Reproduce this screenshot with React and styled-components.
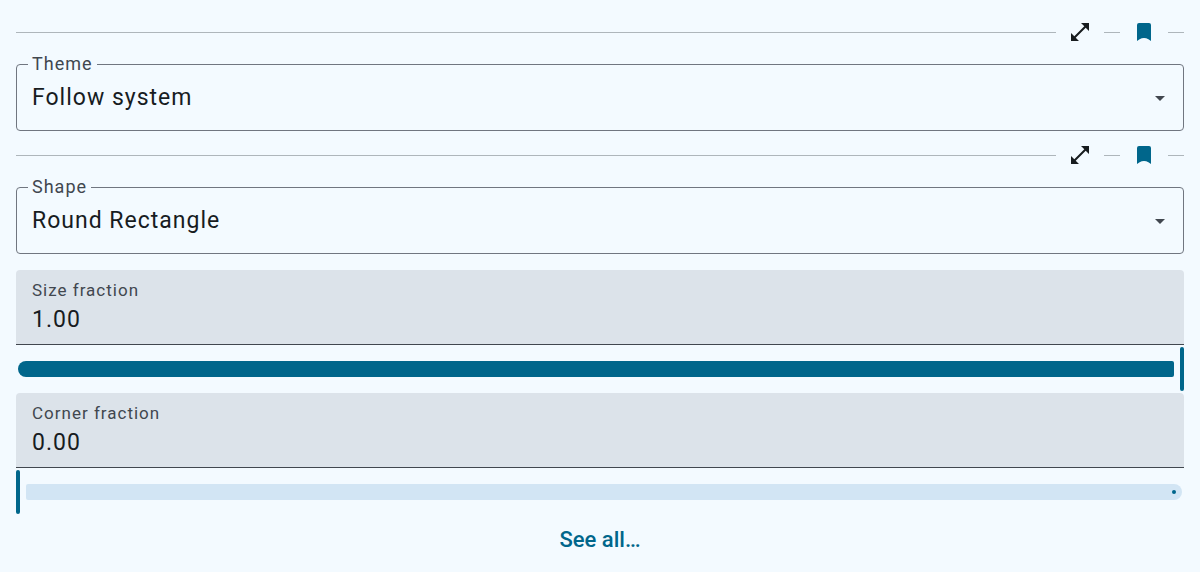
import React, { useId, useState } from "react";
import styled, { createGlobalStyle, ThemeProvider } from "styled-components";

const theme = {
  surface: "#f3faff",
  field: "#dce3ea",
  text: "#171c1f",
  label: "#41474f",
  outline: "#707680",
  divider: "#aeb6bb",
  primary: "#00668b",
  track: "#d2e5f4",
};

const GlobalStyle = createGlobalStyle`
  *, *::before, *::after { box-sizing: border-box; }
  body {
    margin: 0;
    background: ${theme.surface};
    color: ${theme.text};
    font-family: Roboto, "Liberation Sans", sans-serif;
  }
`;

const Page = styled.main`
  display: flex;
  flex-direction: column;
  padding: 8px 16px;
`;

const Settings = styled.div`
  display: flex;
  flex-direction: column;
  margin-bottom: 16px;
`;

const Toolbar = styled.div`
  display: flex;
  align-items: center;
  height: 48px;
`;

const Rule = styled.hr`
  flex: ${(p) => (p.$short ? "0 0 16px" : "1")};
  height: 1px;
  margin: 0;
  border: 0;
  background: ${(p) => p.theme.divider};
`;

const IconButton = styled.button`
  display: grid;
  place-items: center;
  width: 48px;
  height: 48px;
  padding: 0;
  border: 0;
  border-radius: 50%;
  background: none;
  color: ${(p) => (p.$active ? p.theme.primary : p.theme.text)};
  cursor: pointer;
`;

const Icon = styled.svg`
  display: block;
  width: 24px;
  height: 24px;
  fill: currentColor;
`;

const Outlined = styled.fieldset`
  min-width: 0;
  margin: 0;
  padding: 0;
  border: 1px solid ${(p) => p.theme.outline};
  border-radius: 4px;
`;

const Legend = styled.legend`
  margin-left: 11px;
  padding: 0 4px;
  height: 16px;
  color: ${(p) => p.theme.label};
  font-size: 18px;
  line-height: 16px;
  letter-spacing: 1px;
`;

const SelectRow = styled.div`
  display: grid;
  align-items: center;
  margin-top: -6px;

  > * { grid-area: 1 / 1; }
  > svg {
    justify-self: end;
    margin-right: 11px;
    color: ${(p) => p.theme.label};
    pointer-events: none;
  }
`;

const Select = styled.select`
  appearance: none;
  width: 100%;
  height: 64px;
  padding: 0 48px 0 15px;
  border: 0;
  background: none;
  color: ${(p) => p.theme.text};
  font: 400 23px/32px Roboto, "Liberation Sans", sans-serif;
  letter-spacing: 1px;
`;

const Filled = styled.div`
  display: flex;
  flex-direction: column;
  padding: 8px 16px 6px;
  border-bottom: 1px solid ${(p) => p.theme.label};
  border-radius: 4px 4px 0 0;
  background: ${(p) => p.theme.field};
`;

const FilledLabel = styled.label`
  color: ${(p) => p.theme.label};
  font-size: 17px;
  line-height: 24px;
  letter-spacing: 1px;
`;

const TextInput = styled.input`
  width: 100%;
  height: 36px;
  padding: 0;
  border: 0;
  outline: 0;
  background: none;
  color: ${(p) => p.theme.text};
  font: 400 23px/36px Roboto, "Liberation Sans", sans-serif;
  letter-spacing: 1px;
`;

const SliderBox = styled.div`
  position: relative;
  display: flex;
  align-items: center;
  gap: 6px;
  height: 48px;
`;

const ActiveTrack = styled.div`
  height: 16px;
  margin-left: 2px;
  border-radius: 8px 2px 2px 8px;
  background: ${(p) => p.theme.primary};
`;

const Thumb = styled.div`
  flex: none;
  width: 4px;
  height: 44px;
  border-radius: 2px;
  background: ${(p) => p.theme.primary};
`;

const InactiveTrack = styled.div`
  display: flex;
  align-items: center;
  justify-content: flex-end;
  height: 16px;
  margin-right: 2px;
  padding-right: 6px;
  border-radius: 2px 8px 8px 2px;
  background: ${(p) => p.theme.track};

  &::after {
    content: "";
    width: 4px;
    height: 4px;
    border-radius: 50%;
    background: ${(p) => p.theme.primary};
  }
`;

const Range = styled.input`
  position: absolute;
  inset: 0;
  width: 100%;
  height: 100%;
  margin: 0;
  opacity: 0;
  cursor: pointer;
`;

const TextButton = styled.button`
  align-self: center;
  height: 48px;
  padding: 0 24px;
  border: 0;
  border-radius: 24px;
  background: none;
  color: ${(p) => p.theme.primary};
  font: 500 22px/32px Roboto, "Liberation Sans", sans-serif;
  cursor: pointer;
`;

function SettingToolbar() {
  return (
    <Toolbar>
      <Rule />
      <IconButton type="button" aria-label="Expand">
        <Icon viewBox="0 0 24 24" aria-hidden="true">
          <path d="M21 11V3h-8l3.29 3.29-10 10L3 13v8h8l-3.29-3.29 10-10z" />
        </Icon>
      </IconButton>
      <Rule $short />
      <IconButton type="button" $active aria-label="Bookmark" aria-pressed="true">
        <Icon viewBox="0 0 24 24" aria-hidden="true">
          <path d="M7 3h10a2 2 0 0 1 2 2v16l-2.6-1.7c-2.7-1.8-6.1-1.8-8.8 0L5 21V5a2 2 0 0 1 2-2z" />
        </Icon>
      </IconButton>
      <Rule $short />
    </Toolbar>
  );
}

function SelectField({ label, options }) {
  const id = useId();
  return (
    <Outlined>
      <Legend>
        <label htmlFor={id}>{label}</label>
      </Legend>
      <SelectRow>
        <Select id={id} defaultValue={options[0]}>
          {options.map((o) => (
            <option key={o}>{o}</option>
          ))}
        </Select>
        <Icon viewBox="0 0 24 24" aria-hidden="true">
          <path d="M7 10l5 5 5-5z" />
        </Icon>
      </SelectRow>
    </Outlined>
  );
}

function FractionField({ label, initial }) {
  const id = useId();
  const [value, setValue] = useState(initial);
  return (
    <>
      <Filled>
        <FilledLabel htmlFor={id}>{label}</FilledLabel>
        <TextInput id={id} value={value.toFixed(2)} readOnly />
      </Filled>
      <SliderBox>
        {value > 0 && <ActiveTrack style={{ flexGrow: value }} />}
        <Thumb />
        {value < 1 && <InactiveTrack style={{ flexGrow: 1 - value }} />}
        <Range
          type="range"
          min="0"
          max="1"
          step="0.01"
          value={value}
          aria-label={label}
          onChange={(e) => setValue(Number(e.target.value))}
        />
      </SliderBox>
    </>
  );
}

export default function App() {
  return (
    <ThemeProvider theme={theme}>
      <GlobalStyle />
      <Page>
        <SettingToolbar />
        <SelectField label="Theme" options={["Follow system"]} />
        <SettingToolbar />
        <Settings>
          <SelectField label="Shape" options={["Round Rectangle"]} />
        </Settings>
        <FractionField label="Size fraction" initial={1} />
        <FractionField label="Corner fraction" initial={0} />
        <TextButton type="button">See all…</TextButton>
      </Page>
    </ThemeProvider>
  );
}
